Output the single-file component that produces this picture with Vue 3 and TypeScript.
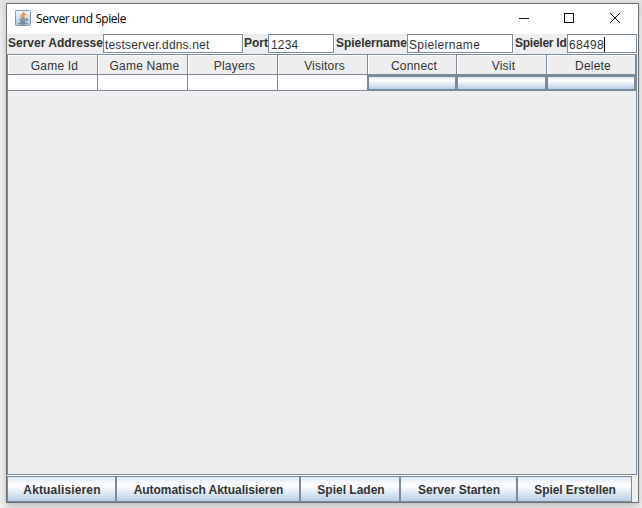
<script setup lang="ts">
import { ref } from 'vue'

interface Field { label: string; value: string; name: string; active?: boolean }

const fields = ref<Field[]>([
  { label: 'Server Addresse', value: 'testserver.ddns.net', name: 'address' },
  { label: 'Port', value: '1234', name: 'port' },
  { label: 'Spielername', value: 'Spielername', name: 'player' },
  { label: 'Spieler Id', value: '68498', name: 'id', active: true },
])
const columns: string[] = ['Game Id', 'Game Name', 'Players', 'Visitors', 'Connect', 'Visit', 'Delete']
const actions: { text: string; name: string }[] = [
  { text: 'Aktualisieren', name: 'refresh' },
  { text: 'Automatisch Aktualisieren', name: 'auto' },
  { text: 'Spiel Laden', name: 'load' },
  { text: 'Server Starten', name: 'start' },
  { text: 'Spiel Erstellen', name: 'create' },
]
</script>

<template>
  <div class="desktop">
    <main class="window">
      <header class="titlebar">
        <svg class="logo" width="16" height="16" viewBox="0 0 16 16">
          <defs>
            <linearGradient id="tile" x1="0" y1="0" x2="0" y2="1">
              <stop offset="0" stop-color="#f4f6f8" />
              <stop offset="1" stop-color="#b5c6d5" />
            </linearGradient>
          </defs>
          <rect x=".5" y=".5" width="15" height="15" rx="1" fill="url(#tile)" stroke="#8197a9" />
          <path d="M8.8 1.8C9.4 3.8 5.6 4.6 6.4 6.3C6.700 7 7.4 7.500 7.600 8.200M10.600 4C8.700 4.700 7.900 5.500 8.800 6.600C9.200 7.100 8.900 7.700 8.300 8.200" fill="none" stroke="#f08020" stroke-width="1.400" />
          <path d="M4.500 9H10.700M5 10.900H10.500M5.600 12.300H9.900M11 8.900C13.500 8.200 13.200 10.700 11 11M3.400 13.200C3.800 14.200 11.200 14.200 12.600 13.200" fill="none" stroke="#3f6486" stroke-width="1" />
        </svg>
        <span class="title">Server und Spiele</span>
        <svg class="controls" width="104" height="12" viewBox="0 0 104 12" fill="none" stroke="#111" shape-rendering="crispEdges">
          <path d="M0 6.5H10" />
          <rect x="45.500" y="1.500" width="9" height="9" />
          <path d="M91 1L101 11M101 1L91 11" shape-rendering="auto" />
        </svg>
      </header>

      <form class="form" @submit.prevent>
        <div v-for="f in fields" :key="f.name" class="field" :class="f.name">
          <label><span>{{ f.label }}</span></label>
          <div class="input"><span>{{ f.value }}</span><i v-if="f.active" class="caret"></i></div>
        </div>
      </form>

      <section class="pane">
        <div class="grid head">
          <div v-for="c in columns" :key="c" class="th">{{ c }}</div>
        </div>
        <div class="grid row">
          <div v-for="(c, i) in columns" :key="c" :class="i > 3 ? 'cellbutton' : 'td'"></div>
        </div>
      </section>

      <footer class="actions">
        <button v-for="a in actions" :key="a.name" type="button" :class="a.name"><span>{{ a.text }}</span></button>
      </footer>
    </main>
  </div>
</template>

<style>
body { overflow: hidden; }
</style>

<style scoped>
* { box-sizing: border-box; }
.desktop {
  width: 642px; height: 508px; padding: 3px 3px 5px 6px;
  background: linear-gradient(#e3e3e3 0 3px, #efefef 20px);
  overflow: hidden;
}
.window {
  width: 633px; height: 500px; border: 1px solid #6e7173;
  background: #eee; color: #333;
  font: 12px "Liberation Sans", Arial, sans-serif;
  display: flex; flex-direction: column;
  box-shadow: 0 3px 7px rgba(0, 0, 0, .22);
}
.titlebar { height: 30px; flex: none; display: flex; align-items: center; padding: 0 15px 2px 8px; background: #fff; }
.title { margin-left: 5px; font: 12px "Open Sans", "Noto Sans", sans-serif; letter-spacing: -.45px; color: #000; white-space: nowrap; }
.controls { margin-left: auto; }
.form { height: 20px; flex: none; display: flex; }
.field { display: flex; white-space: nowrap; }
.field label { flex: none; font-weight: bold; line-height: 18px; padding-left: 1px; }
.input {
  flex: 1; height: 19px; display: flex; align-items: center; background: #fff;
  border: 1px solid #7a8a99; padding: 2px 0 0 1px; margin-right: 1px;
  box-shadow: 1px 1px 0 #fff; letter-spacing: .16px;
}
.address { width: 237px; }
.address label { width: 96px; }
.port { width: 91px; }
.port label { width: 24px; padding-left: 0; }
.port .input { padding-left: 2px; }
.player { width: 179px; }
.player label { width: 72px; letter-spacing: -.05px; }
.player .input { letter-spacing: .35px; }
.id { width: 124px; }
.id label { width: 53px; letter-spacing: -.25px; }
.id .input { letter-spacing: .35px; }
.caret { width: 1px; height: 15px; background: #000; }
.pane { height: 421px; flex: none; border: 1px solid #7a8a99; box-shadow: 0 1px 0 #fff; margin-right: 1px; }
.grid { display: grid; grid-template-columns: 90px 90px 90px 90px 89px 90px 89px; }
.th {
  height: 20px; line-height: 22px; padding-left: 4px; text-align: center; font-size: 12px;
  letter-spacing: .2px;
  border-right: 1px solid #7a8a99; border-bottom: 1px solid #7a8a99;
  box-shadow: inset 1px 1px 0 #fff;
}
.td { height: 16px; background: #fff; border-right: 1px solid #7a8a99; border-bottom: 1px solid #7a8a99; }
.cellbutton { height: 16px; border: 2px solid #7a8a99; border-left-width: 1px; background: linear-gradient(#dde8f3, #fff 30%, #b8cfe5); }
.actions { height: 27px; flex: none; margin-top: 1px; display: flex; }
.actions button {
  height: 26px; flex: none; border: 1px solid #7a8a99; border-right-width: 2px;
  border-left-width: 0; padding: 2px 0 0 1px; color: #333;
  font: bold 12px "Liberation Sans", Arial, sans-serif; white-space: nowrap;
  background: linear-gradient(#dde8f3, #fff 32%, #fff 36%, #b8cfe5);
}
.actions .refresh { width: 110px; border-left-width: 1px; letter-spacing: .15px; }
.actions .auto { width: 184px; letter-spacing: -.05px; }
.actions .load { width: 100px; padding-left: 2px; }
.actions .start { width: 117px; }
.actions .create { width: 114px; border-right-width: 1px; letter-spacing: -.08px; }
</style>
